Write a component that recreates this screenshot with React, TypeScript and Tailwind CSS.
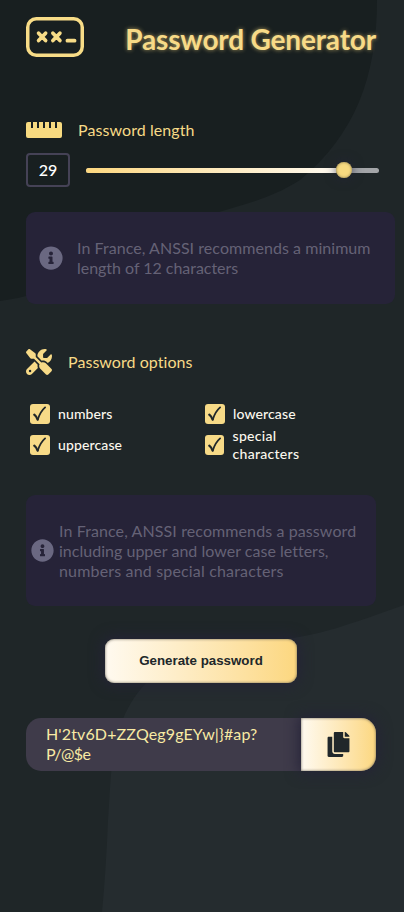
import { FaInfoCircle, FaCopy } from "react-icons/fa";
import { FaScrewdriverWrench } from "react-icons/fa6";

function Logo() {
  return (
    <svg width="58" height="40" viewBox="0 0 58 40" fill="none" stroke="#f7dc87" strokeLinecap="round">
      <rect x="1.75" y="1.75" width="54.5" height="36.5" rx="8.5" strokeWidth="3.5" />
      <path
        d="M12.6 16.2l7 7.4M19.6 16.2l-7 7.4M26.9 16.2l7 7.4M33.9 16.2l-7 7.4M41.4 23.7h7.2"
        strokeWidth="3.7"
      />
    </svg>
  );
}

function Ruler() {
  return (
    <svg width="36" height="16" viewBox="0 0 36 16" fill="#f7da80">
      <path d="M2 0h3v6h2V0h4v6h2V0h4v6h2V0h4v6h2V0h4v6h2V0h3a2 2 0 0 1 2 2v12a2 2 0 0 1-2 2H2a2 2 0 0 1-2-2V2a2 2 0 0 1 2-2Z" />
    </svg>
  );
}

function Option({ label, tight }: { label: string[]; tight?: boolean }) {
  return (
    <div className="flex h-[31px] items-center">
      <span
        className={
          tight
            ? "flex h-5 w-[19px] shrink-0 items-center justify-center rounded-[3px] bg-[#f7da87]"
            : "flex size-5 shrink-0 items-center justify-center rounded-[3px] bg-[#f7da87]"
        }
      >
        <svg width="14" height="16" viewBox="0 0 14 16" fill="none" stroke="#20272a" strokeLinecap="round">
          <path d="M1.3 8.6C2.8 9.8 3.8 11.4 4.6 13.6" strokeWidth="2.2" />
          <path d="M4.8 13.5C6.2 8.8 8.9 4.2 12.1 1.4" strokeWidth="1.8" />
        </svg>
      </span>
      <span
        className={
          tight
            ? "ml-[8.5px] text-[14px] leading-[18px] font-medium tracking-[0.3px] text-[#fcf8ee]"
            : "ml-2 text-[14px] leading-[18px] font-medium tracking-[0.12px] text-[#fcf8ee]"
        }
      >
        {label.map((l) => (
          <span key={l} className="block whitespace-nowrap">
            {l}
          </span>
        ))}
      </span>
    </div>
  );
}

export default function App() {
  return (
    <div className="relative isolate h-[912px] w-[404px] overflow-hidden bg-[#1f2628] font-['Lato',sans-serif]">
      <svg className="absolute inset-0 -z-10" width="404" height="912" viewBox="0 0 404 912">
        <path d="M0 0H377C377 76 355 135 300 180C270 199 245 204 219 212C150 240 90 288 0 301Z" fill="#181f20" />
        <path d="M404 605C350 624 320 636 275 640C205 650 150 655 123 719C110 750 111 780 108 820Q106 870 102 912H404Z" fill="#252c2f" />
      </svg>

      <header className="mt-[17px] flex h-10 items-center justify-between pr-[28px] pl-[26px]">
        <Logo />
        <h1 className="mt-1 text-[28px] leading-9 font-bold tracking-[-0.17px] whitespace-nowrap text-[#f7da87] [text-shadow:0_0_4px_rgba(247,218,128,0.65)]">
          Password Generator
        </h1>
      </header>

      <main className="pl-[26px]">
        <section className="pt-[63px]">
          <div className="flex h-5 items-center">
            <Ruler />
            <h2 className="ml-4 text-[16px] leading-5 tracking-[0.08px] text-[#f7da87]">Password length</h2>
          </div>
          <div className="mt-[13px] flex h-[34px] items-center">
            <div className="flex h-[34px] w-11 items-center justify-center rounded-[4px] border-2 border-[#454256] text-[16px] font-medium text-white">
              29
            </div>
            <div className="ml-4 flex h-[5px] w-[293px] items-center rounded-full bg-[#a3a5a8]">
              <div className="h-[5px] w-[250px] rounded-l-full bg-linear-to-r from-[#fcd77f] to-[#fffaf0]" />
              <div className="size-4 shrink-0 rounded-full bg-[#f7da80] shadow-[0_0_12px_rgba(37,35,56,0.85),inset_0_0_3px_#8b7b4c]" />
            </div>
          </div>
          <div className="mt-[25px] flex h-[92px] w-[369px] items-center rounded-[9px] bg-[#262338] pl-[13px] text-[#656276]">
            <FaInfoCircle size={24} color="#72708a" className="opacity-90" />
            <p className="ml-[14px] text-[16px] leading-5 whitespace-nowrap">
              <span className="block tracking-[0.05px]">In France, ANSSI recommends a minimum</span>
              <span className="block tracking-[-0.03px]">length of 12 characters</span>
            </p>
          </div>
        </section>

        <section className="pt-[45px]">
          <div className="flex h-[26px] items-center">
            <FaScrewdriverWrench size={26} color="#f7da87" />
            <h2 className="ml-4 text-[16px] leading-5 tracking-[0.05px] text-[#f7da87]">Password options</h2>
          </div>
          <div className="mt-[23px] ml-1 grid w-[350px] grid-cols-2">
            <Option label={["numbers"]} />
            <Option label={["lowercase"]} />
            <Option label={["uppercase"]} />
            <Option label={["special", "characters"]} tight />
          </div>
          <div className="mt-[35px] flex h-[111px] w-[350px] items-center rounded-[9px] bg-[#262338] pl-[5px] text-[#656276]">
            <FaInfoCircle size={23} color="#72708a" className="shrink-0 opacity-90" />
            <p className="ml-[5px] pt-px text-[16px] leading-5 whitespace-nowrap">
              <span className="block tracking-[0.1px]">In France, ANSSI recommends a password</span>
              <span className="block tracking-[0.02px]">including upper and lower case letters,</span>
              <span className="block tracking-[0.17px]">numbers and special characters</span>
            </p>
          </div>
        </section>

        <button className="mt-[33px] ml-[79px] flex h-11 w-48 items-center justify-center rounded-[9px] bg-linear-to-r from-[#fffaf0] to-[#fcd77f] font-['Liberation_Sans',Arial,sans-serif] text-[13.333px] font-bold text-[#20272a] shadow-[0_0_14px_2px_#252338,inset_0_0_3px_#6d6658]">
          Generate password
        </button>

        <div className="mt-[35px] flex h-[53px] w-[350px] rounded-[15px] bg-[#3f3b4a]">
          <p className="w-[275px] pt-[6px] pl-5 text-[16px] leading-5 whitespace-nowrap text-[#f8eaa4]">
            <span className="block tracking-[0.14px]">H'2tv6D+ZZQeg9gEYw|&#125;#ap?</span>
            <span className="block tracking-[-0.6px]">P/@$e</span>
          </p>
          <button className="flex w-[75px] items-center justify-center rounded-r-[15px] bg-linear-to-r from-[#fffaf0] to-[#fcd77f] pr-px shadow-[0_0_14px_2px_#252338,inset_0_0_3px_#6d6658]">
            <FaCopy size={25} color="#20272a" />
          </button>
        </div>
      </main>
    </div>
  );
}
